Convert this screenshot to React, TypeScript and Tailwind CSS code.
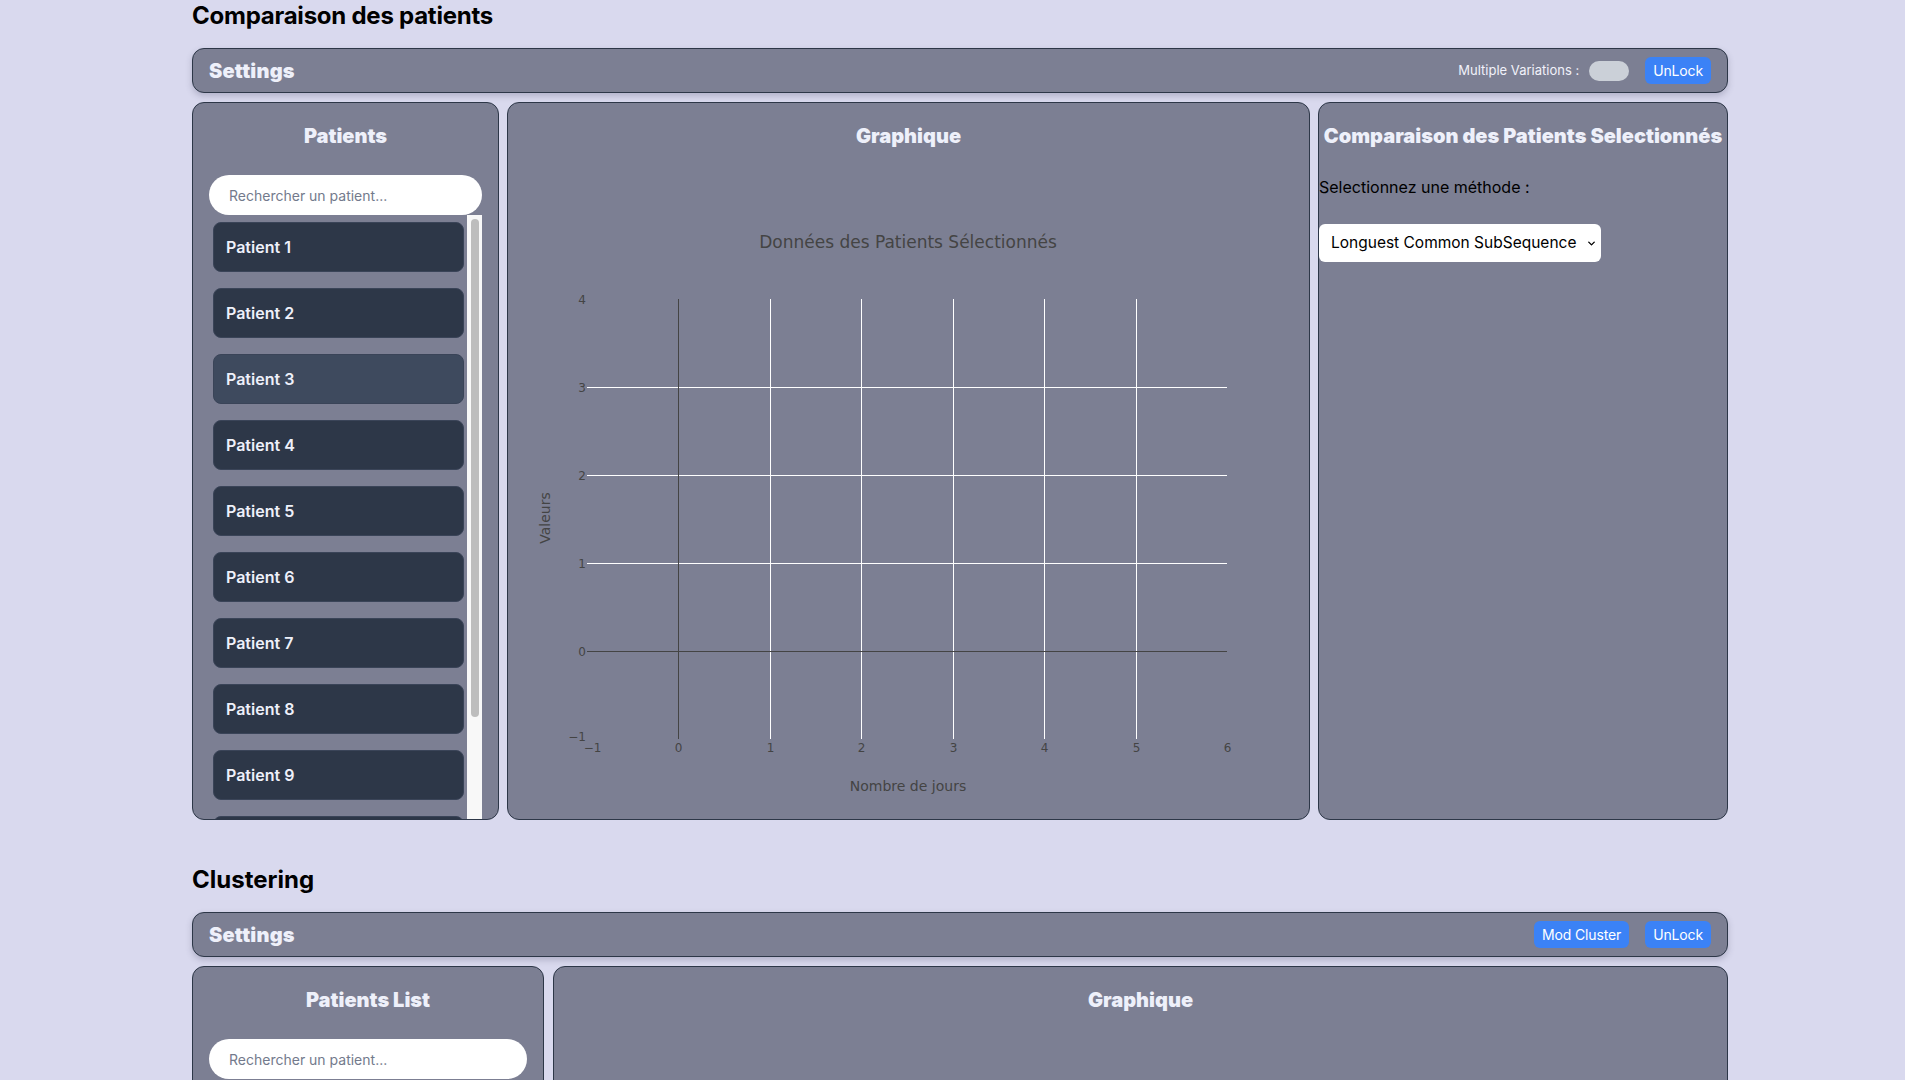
import { ChevronDown } from 'lucide-react'

const PATIENTS = Array.from({ length: 11 }, (_, i) => `Patient ${i + 1}`)

const X_TICKS = [-1, 0, 1, 2, 3, 4, 5, 6]
const Y_TICKS = [4, 3, 2, 1, 0, -1]

// plot geometry (svg coords)
const PX0 = 63
const PX1 = 703
const PY0 = 146
const PY1 = 586
const xPos = (v: number) => Math.round(PX0 + ((v + 1) * (PX1 - PX0)) / 7) + 0.5
const yPos = (v: number) => Math.round(PY1 - ((v + 1) * (PY1 - PY0)) / 5) + 0.5

function SettingsBar({ children }: { children: React.ReactNode }) {
  return (
    <div className="h-[45px] flex items-center justify-between px-4 bg-[#7c7f93] border border-[#2d3748] rounded-xl shadow-[0_3px_6px_rgba(60,60,90,0.25)]">
      <h3 className="text-[20px] font-black text-[#eef0fa] tracking-[0.01em]">Settings</h3>
      <div className="flex items-center">{children}</div>
    </div>
  )
}

function BlueButton({ label }: { label: string }) {
  return (
    <button className="h-[27px] px-2 rounded-md bg-[#3b82f6] text-white text-[14px] leading-none tracking-[-0.01em]">
      {label}
    </button>
  )
}

function PanelTitle({ children }: { children: React.ReactNode }) {
  return (
    <h2 className="text-center text-[20px] font-black leading-[34px] text-[#eef0fa] whitespace-nowrap">
      {children}
    </h2>
  )
}

function SearchBox() {
  return (
    <input
      type="text"
      placeholder="Rechercher un patient..."
      className="w-full h-10 rounded-full bg-white pl-5 pr-4 text-[14px] text-gray-800 placeholder:text-[#737a8c] outline-none"
    />
  )
}

function Chart() {
  return (
    <svg width="768" height="650" className="block" style={{ fontFamily: '"DejaVu Sans", Verdana, sans-serif' }}>
      <text x="384" y="89" textAnchor="middle" dominantBaseline="central" fontSize="17" fill="#444">
        Données des Patients Sélectionnés
      </text>

      <g shapeRendering="crispEdges">
        {[1, 2, 3].map((v) => (
          <line key={`h${v}`} x1={PX0} x2={PX1} y1={yPos(v)} y2={yPos(v)} stroke="#fff" strokeWidth="1" />
        ))}
        {[1, 2, 3, 4, 5].map((v) => (
          <line key={`v${v}`} x1={xPos(v)} x2={xPos(v)} y1={PY0} y2={PY1} stroke="#fff" strokeWidth="1" />
        ))}
        {/* zero lines */}
        <line x1={PX0} x2={PX1} y1={yPos(0)} y2={yPos(0)} stroke="#444" strokeWidth="1" />
        <line x1={xPos(0)} x2={xPos(0)} y1={PY0} y2={PY1} stroke="#444" strokeWidth="1" />
      </g>

      {Y_TICKS.map((v) => (
        <text key={`yl${v}`} x={PX0 - 1} y={yPos(v) - (v === -1 ? 3 : 0)} textAnchor="end" dominantBaseline="central" fontSize="12" fill="#444">
          {v < 0 ? `\u2212${-v}` : v}
        </text>
      ))}
      {X_TICKS.map((v) => (
        <text key={`xl${v}`} x={xPos(v) + (v === -1 ? 5 : 0)} y={PY1 + 9} textAnchor="middle" dominantBaseline="central" fontSize="12" fill="#444">
          {v < 0 ? `\u2212${-v}` : v}
        </text>
      ))}

      <text x="384" y="633" textAnchor="middle" dominantBaseline="central" fontSize="14" fill="#444">
        Nombre de jours
      </text>
      <text x="21" y="365" textAnchor="middle" dominantBaseline="central" fontSize="14" fill="#444" transform="rotate(-90 21 365)">
        Valeurs
      </text>
    </svg>
  )
}

export default function App() {
  return (
    <div
      className="h-screen overflow-hidden bg-[#d9d9ee] text-black"
      style={{ fontFamily: 'Inter, "Noto Sans", sans-serif' }}
    >
      <div className="ml-[192px] w-[1536px]">
        {/* Comparaison */}
        <section>
          <h1 className="text-[24px] font-bold leading-8 mb-4 tracking-[-0.01em]">Comparaison des patients</h1>
          <SettingsBar>
            <span className="text-[13px] text-[#f1f2fa] mr-[10px]">Multiple Variations :</span>
            <span className="w-10 h-5 rounded-full bg-[#cbd0d8] mr-4" />
            <BlueButton label="UnLock" />
          </SettingsBar>

          <div className="flex gap-2 mt-[9px] h-[718px]">
            {/* patients */}
            <div className="w-[307px] flex flex-col bg-[#7c7f93] border border-[#2d3748] rounded-xl pt-4 px-4 overflow-hidden">
              <PanelTitle>Patients</PanelTitle>
              <div className="mt-[22px]">
                <SearchBox />
              </div>
              <div className="flex-1 min-h-0 flex">
                <div className="flex-1 overflow-hidden pl-1 pr-[3px] pt-[7px]">
                  <div className="flex flex-col gap-4">
                    {PATIENTS.map((p, i) => (
                      <div
                        key={p}
                        className={`h-[50px] shrink-0 flex items-center pl-3 rounded-lg border border-[#3a4458] text-[16px] font-semibold text-[#eef0fa] ${
                          i === 2 ? 'bg-[#3e4a5e]' : 'bg-[#2d3748]'
                        }`}
                      >
                        {p}
                      </div>
                    ))}
                  </div>
                </div>
                {/* scrollbar */}
                <div className="w-[15px] bg-[#f8f8f8] pt-1">
                  <div className="mx-auto w-2 h-[498px] rounded-full bg-[#bdbdbd]" />
                </div>
              </div>
            </div>

            {/* graph */}
            <div className="flex-1 bg-[#7c7f93] border border-[#2d3748] rounded-xl pt-4 px-4 overflow-hidden">
              <PanelTitle>Graphique</PanelTitle>
              <Chart />
            </div>

            {/* compare */}
            <div className="w-[410px] bg-[#7c7f93] border border-[#2d3748] rounded-xl pt-4 overflow-hidden">
              <PanelTitle>Comparaison des Patients Selectionnés</PanelTitle>
              <p className="mt-[22px] text-[16px] leading-6 text-black">Selectionnez une méthode :</p>
              <div className="relative mt-[25px] w-[282px]">
                <select className="appearance-none w-full h-[38px] rounded-md bg-white pl-3 pr-6 text-[15.5px] text-black outline-none">
                  <option>Longuest Common SubSequence</option>
                  <option>Dynamic Time Warping</option>
                </select>
                <ChevronDown className="absolute right-[4px] top-[14px] w-[11px] h-[11px] text-black pointer-events-none" strokeWidth={3} />
              </div>
            </div>
          </div>
        </section>

        {/* Clustering */}
        <section className="mt-[44px]">
          <h1 className="text-[24px] font-bold leading-8 mb-4">Clustering</h1>
          <SettingsBar>
            <BlueButton label="Mod Cluster" />
            <span className="w-4" />
            <BlueButton label="UnLock" />
          </SettingsBar>

          <div className="flex gap-[9px] mt-[9px] h-[718px]">
            <div className="w-[352px] bg-[#7c7f93] border border-[#2d3748] rounded-xl pt-4 px-4 overflow-hidden">
              <PanelTitle>Patients List</PanelTitle>
              <div className="mt-[22px]">
                <SearchBox />
              </div>
            </div>
            <div className="flex-1 bg-[#7c7f93] border border-[#2d3748] rounded-xl pt-4 px-4 overflow-hidden">
              <PanelTitle>Graphique</PanelTitle>
            </div>
          </div>
        </section>
      </div>
    </div>
  )
}
